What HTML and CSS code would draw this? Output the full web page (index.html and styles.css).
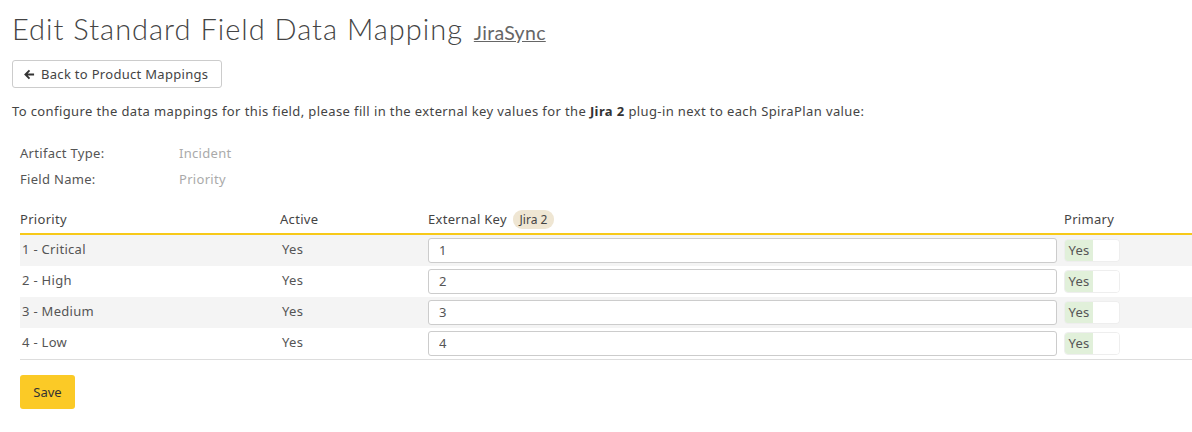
FILE: index.html
```html
<!DOCTYPE html>
<html>
<head>
<meta charset="utf-8">
<link rel="stylesheet" href="styles.css">
</head>
<body>
<div class="page">
  <h1 class="title">Edit Standard Field Data Mapping <a class="sub" href="#">JiraSync</a></h1>
  <div class="toolbar">
    <button class="btn-back"><svg width="11" height="11" viewBox="0 0 12 12"><path d="M6 1.5 L1.5 6 L6 10.5 M1.5 6 H11" fill="none" stroke="#333" stroke-width="2"/></svg> Back to Product Mappings</button>
  </div>
  <p class="intro">To configure the data mappings for this field, please fill in the external key values for the <b>Jira 2</b> plug-in next to each SpiraPlan value:</p>
  <div class="info">
    <div class="info-row"><span class="lbl">Artifact Type:</span><span class="val">Incident</span></div>
    <div class="info-row"><span class="lbl">Field Name:</span><span class="val">Priority</span></div>
  </div>
  <table class="grid">
    <thead>
      <tr><th class="c1">Priority</th><th class="c2">Active</th><th class="c3">External Key <span class="badge">Jira 2</span></th><th class="c4">Primary</th></tr>
    </thead>
    <tbody>
      <tr class="alt"><td class="txt">1 - Critical</td><td class="txt">Yes</td><td><input class="key" value="1"></td><td><span class="toggle"><span class="on">Yes</span><span class="off"></span></span></td></tr>
      <tr><td class="txt">2 - High</td><td class="txt">Yes</td><td><input class="key" value="2"></td><td><span class="toggle"><span class="on">Yes</span><span class="off"></span></span></td></tr>
      <tr class="alt"><td class="txt">3 - Medium</td><td class="txt">Yes</td><td><input class="key" value="3"></td><td><span class="toggle"><span class="on">Yes</span><span class="off"></span></span></td></tr>
      <tr><td class="txt">4 - Low</td><td class="txt">Yes</td><td><input class="key" value="4"></td><td><span class="toggle"><span class="on">Yes</span><span class="off"></span></span></td></tr>
    </tbody>
  </table>
  <div class="actions"><button class="btn-save">Save</button></div>
</div>
</body>
</html>
```
FILE: styles.css
```css
html, body { margin: 0; padding: 0; background: #fff; }
body { font-family: "Noto Sans", sans-serif; font-size: 13px; color: #444; letter-spacing: 0.3px; }
.page { padding: 0 0 0 12px; }
.title { margin: 0; padding-top: 10px; height: 38px; font-family: "Lato", sans-serif; font-weight: 300; font-size: 29px; color: #444; letter-spacing: 1px; line-height: 38px; }
.sub { font-size: 19.5px; color: #666; font-weight: 400; letter-spacing: 0.3px; text-decoration: underline; margin-left: 2px; }
.toolbar { margin-top: 12px; }
.btn-back { font-family: inherit; font-size: 13px; letter-spacing: 0.3px; color: #444; background: #fff; border: 1px solid #ccc; border-radius: 3px; height: 28px; width: 210px; padding: 0 11px; text-align: left; display: flex; align-items: center; gap: 6px; }
.intro { margin: 14px 0 0; line-height: 18px; font-size: 13px; color: #444; letter-spacing: 0.39px; }
.intro b { font-weight: 700; color: #333; }
.info { margin: 20px 0 0 8px; }
.info-row { display: flex; height: 26px; align-items: center; }
.lbl { width: 159px; color: #555; }
.val { color: #aaa; }
.grid { margin: 12px 0 0 8px; width: calc(100% - 8px); border-collapse: collapse; }
.grid th { text-align: left; font-weight: 400; color: #444; height: 28px; padding: 1px 0 0; border-bottom: 2px solid #f7c919; vertical-align: middle; }
.c1 { width: 260px; }
.c2 { width: 148px; }
.c3 { width: 636px; }
.badge { display: inline-block; background: #efe6d3; border-radius: 9px; padding: 1px 7px; font-size: 12px; margin-left: 2px; letter-spacing: 0; }
.grid td { height: 31px; padding: 0 0 0 2px; vertical-align: middle; color: #555; }
.grid td.txt { padding-bottom: 4px; height: 27px; }
.grid tr.alt td { background: #f4f4f4; }
.grid tbody tr:last-child td { border-bottom: 1px solid #ddd; }
.key { box-sizing: border-box; width: 629px; height: 25px; border: 1px solid #ccc; border-radius: 3px; font-family: inherit; font-size: 13px; color: #555; padding: 0 10px 2px; margin-left: -2px; display: block; }
.toggle { display: inline-flex; height: 23px; border: 1px solid #eee; border-radius: 4px; overflow: hidden; width: 56px; box-sizing: border-box; margin-left: -2px; vertical-align: middle; }
.on { background: #e1f0da; width: 28px; color: #555; display: flex; align-items: center; justify-content: center; padding-bottom: 1px; }
.off { background: #fff; flex: 1; }
.actions { margin: 15px 0 0 8px; }
.btn-save { font-family: inherit; font-size: 13px; color: #333; background: #fbca26; border: none; border-radius: 3px; width: 55px; height: 34px; padding-bottom: 2px; }
```
